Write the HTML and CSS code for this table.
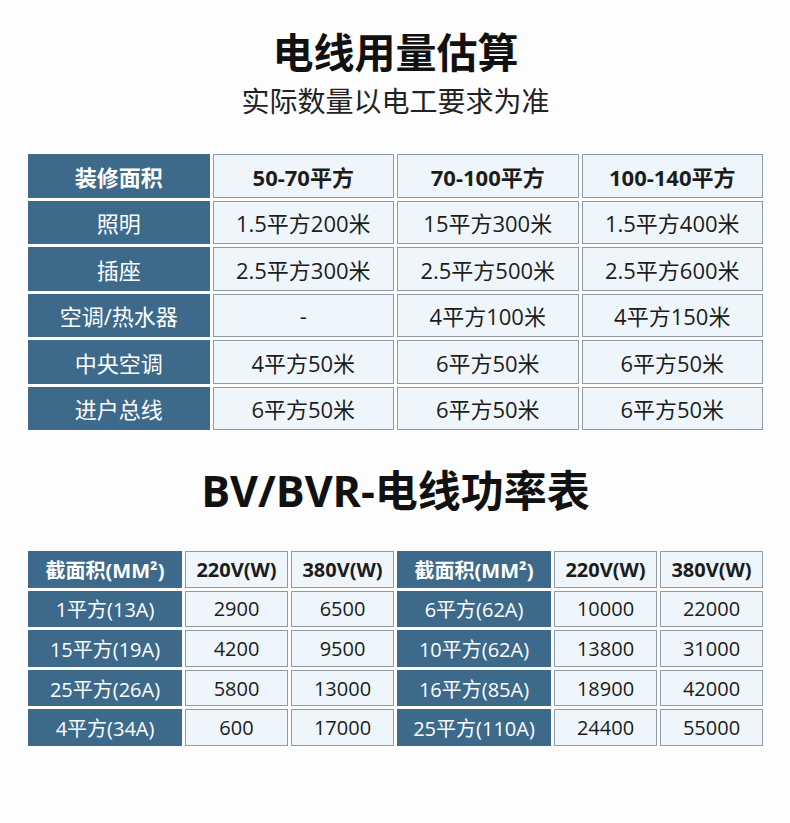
FILE: index.html
```html
<!DOCTYPE html>
<html lang="zh">
<head>
<meta charset="utf-8">
<title>电线用量估算</title>
<link rel="stylesheet" href="styles.css">
</head>
<body>
<main class="page">
  <h1 class="title">电线用量估算</h1>
  <p class="subtitle">实际数量以电工要求为准</p>

  <div class="grid usage">
    <div class="cell dark head">装修面积</div>
    <div class="cell light head">50-70平方</div>
    <div class="cell light head">70-100平方</div>
    <div class="cell light head">100-140平方</div>

    <div class="cell dark">照明</div>
    <div class="cell light">1.5平方200米</div>
    <div class="cell light">15平方300米</div>
    <div class="cell light">1.5平方400米</div>

    <div class="cell dark">插座</div>
    <div class="cell light">2.5平方300米</div>
    <div class="cell light">2.5平方500米</div>
    <div class="cell light">2.5平方600米</div>

    <div class="cell dark">空调/热水器</div>
    <div class="cell light">-</div>
    <div class="cell light">4平方100米</div>
    <div class="cell light">4平方150米</div>

    <div class="cell dark">中央空调</div>
    <div class="cell light">4平方50米</div>
    <div class="cell light">6平方50米</div>
    <div class="cell light">6平方50米</div>

    <div class="cell dark">进户总线</div>
    <div class="cell light">6平方50米</div>
    <div class="cell light">6平方50米</div>
    <div class="cell light">6平方50米</div>
  </div>

  <h2 class="title title2">BV/BVR-电线功率表</h2>

  <div class="grid power">
    <div class="cell dark head">截面积(MM²)</div>
    <div class="cell light head">220V(W)</div>
    <div class="cell light head">380V(W)</div>
    <div class="cell dark head">截面积(MM²)</div>
    <div class="cell light head">220V(W)</div>
    <div class="cell light head">380V(W)</div>

    <div class="cell dark">1平方(13A)</div>
    <div class="cell light">2900</div>
    <div class="cell light">6500</div>
    <div class="cell dark">6平方(62A)</div>
    <div class="cell light">10000</div>
    <div class="cell light">22000</div>

    <div class="cell dark">15平方(19A)</div>
    <div class="cell light">4200</div>
    <div class="cell light">9500</div>
    <div class="cell dark">10平方(62A)</div>
    <div class="cell light">13800</div>
    <div class="cell light">31000</div>

    <div class="cell dark">25平方(26A)</div>
    <div class="cell light">5800</div>
    <div class="cell light">13000</div>
    <div class="cell dark">16平方(85A)</div>
    <div class="cell light">18900</div>
    <div class="cell light">42000</div>

    <div class="cell dark">4平方(34A)</div>
    <div class="cell light">600</div>
    <div class="cell light">17000</div>
    <div class="cell dark">25平方(110A)</div>
    <div class="cell light">24400</div>
    <div class="cell light">55000</div>
  </div>
</main>
</body>
</html>
```

FILE: styles.css
```css
* { box-sizing: border-box; }

html, body {
  margin: 0;
  padding: 0;
  background: #fdfdfd;
}

body {
  font-family: "Open Sans", "Noto Sans CJK SC", sans-serif;
  color: #1c1c1c;
}

.page {
  width: 790px;
  padding: 27px 0 0 28px;
}

.title {
  margin: 0;
  width: 735px;
  text-align: center;
  font-size: 41px;
  line-height: 50px;
  font-weight: 700;
  color: #111;
}

.subtitle {
  margin: 6px 0 0;
  width: 735px;
  text-align: center;
  font-size: 28px;
  line-height: 36px;
  font-weight: 400;
  color: #222;
}

.grid {
  display: grid;
  width: 735px;
  gap: 3px;
}

.usage {
  margin-top: 35px;
  grid-template-columns: repeat(4, 1fr);
  grid-auto-rows: 43.5px;
  font-size: 22px;
}

.title2 {
  margin-top: 36px;
  font-size: 43px;
}

.power {
  margin-top: 35px;
  grid-template-columns: 154px 103px 103px 154px 103px 103px;
  grid-auto-rows: 36.6px;
  font-size: 20px;
}

.cell {
  display: flex;
  align-items: center;
  justify-content: center;
  white-space: nowrap;
}

.dark {
  background: #3d6a8b;
  color: #ffffff;
}

.light {
  background: #eef6fb;
  border: 1px solid #8f9ca6;
  color: #1c1c1c;
}

.head {
  font-weight: 700;
}
```
